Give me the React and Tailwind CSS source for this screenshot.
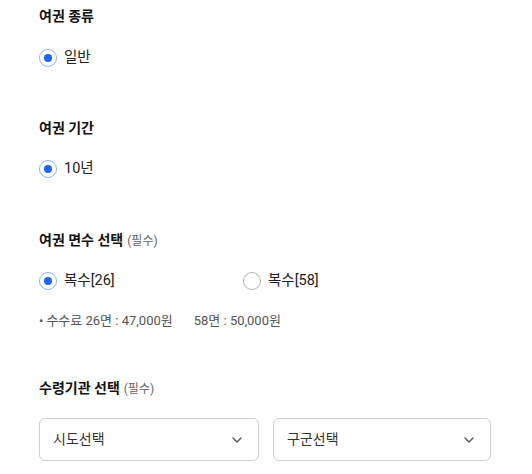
import React from 'react';

const Radio = ({ checked, label }) => (
    <label className="flex items-center gap-[7px] h-[20px]">
        <span className={`w-[18px] h-[18px] rounded-full border-[1.5px] flex items-center justify-center bg-white ${checked ? 'border-[#8fb3f7]' : 'border-[#b5b5b5]'}`}>
            {checked && <span className="w-[8px] h-[8px] rounded-full bg-[#1d64f0]" />}
        </span>
        <span className="text-[14.5px] text-[#222]">{label}</span>
    </label>
);

const Heading = ({ children, required }) => (
    <h2 className="text-[14px] leading-[20px] font-bold text-[#111]">
        {children}
        {required && <span className="ml-[4px] text-[12px] font-normal text-[#666]">(필수)</span>}
    </h2>
);

const Select = ({ placeholder, className }) => (
    <div className={`h-[43px] rounded-[6px] border border-[#cfcfcf] flex items-center justify-between pl-[13px] pr-[16px] ${className}`}>
        <span className="text-[14px] text-[#333]">{placeholder}</span>
        <svg width="10" height="6" viewBox="0 0 10 6" fill="none">
            <path d="M1 1l4 4 4-4" stroke="#555" strokeWidth="1.4" strokeLinecap="round" strokeLinejoin="round" />
        </svg>
    </div>
);

export default function App() {
    return (
        <div className="w-[532px] h-[474px] bg-white pl-[39px] pt-[6px] overflow-hidden" style={{ fontFamily: 'Roboto, "Noto Sans CJK KR", sans-serif' }}>
            <section>
                <Heading>여권 종류</Heading>
                <div className="mt-[22px]">
                    <Radio checked label="일반" />
                </div>
            </section>

            <section className="mt-[50px]">
                <Heading>여권 기간</Heading>
                <div className="mt-[21px]">
                    <Radio checked label="10년" />
                </div>
            </section>

            <section className="mt-[51px]">
                <Heading required>여권 면수 선택</Heading>
                <div className="mt-[20px] flex">
                    <div className="w-[204px]">
                        <Radio checked label="복수[26]" />
                    </div>
                    <Radio label="복수[58]" />
                </div>
                <p className="mt-[21px] text-[13px] leading-[18px] text-[#555]">
                    <span className="mr-[3px]">•</span>수수료 26면 : 47,000원
                    <span className="ml-[21px]">58면 : 50,000원</span>
                </p>
            </section>

            <section className="mt-[48px]">
                <Heading required>수령기관 선택</Heading>
                <div className="mt-[19px] flex gap-[14px] w-[452px]">
                    <Select placeholder="시도선택" className="w-[220px]" />
                    <Select placeholder="구군선택" className="w-[218px]" />
                </div>
            </section>
        </div>
    );
}
